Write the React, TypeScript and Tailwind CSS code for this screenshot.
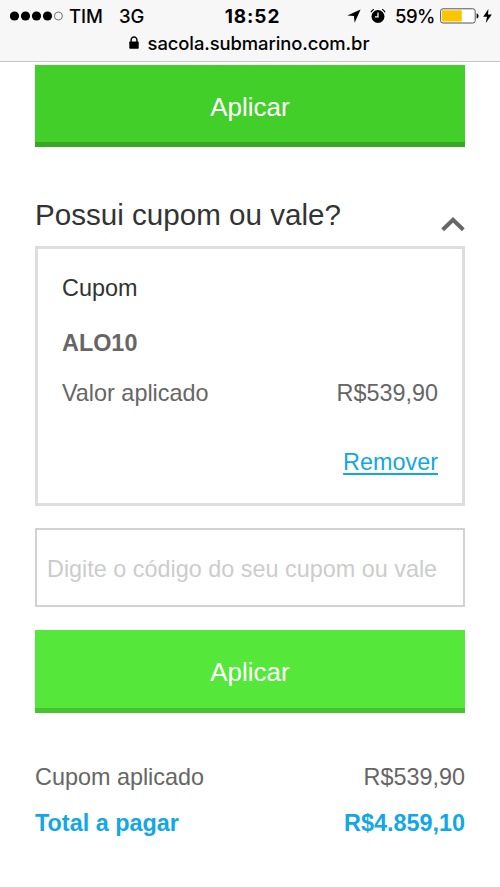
import { Fragment } from "react";

const signal = [true, true, true, true, false];

function StatusBar() {
  return (
    <div className="grid grid-cols-[1fr_60px_1fr] items-center h-8 pl-[10px] pr-[8px] text-black text-[18.5px] leading-8">
      <div className="flex items-center">
        <svg width="53" height="12" viewBox="0 0 53 12" className="shrink-0">
          {signal.map((on, i) => (
            <Fragment key={i}>
              {on ? (
                <circle cx={4.5 + i * 11} cy="6" r="4.6" fill="#000" />
              ) : (
                <circle cx={4.4 + i * 11} cy="6" r="4" fill="none" stroke="#555" strokeWidth="0.8" />
              )}
            </Fragment>
          ))}
        </svg>
        <span className="ml-[6px] w-[50px] font-medium">TIM</span>
        <span className="font-medium">3G</span>
      </div>
      <span className="pl-[3px] pt-[2px] text-center font-bold text-[19px] leading-[30px] tracking-[0.9px] whitespace-nowrap">18:52</span>
      <div className="flex items-center justify-end">
        <svg width="14" height="14" viewBox="0 0 14 14" className="shrink-0">
          <path d="M13.6 0.4L0.3 6.4L6.9 7.1L7.6 13.7Z" fill="#000" />
        </svg>
        <svg width="16" height="16" viewBox="0 0 16 16" className="ml-[9px] shrink-0">
          <circle cx="8" cy="8.5" r="6.5" fill="#000" />
          <path d="M0.9 4.2A8 8 0 0 1 3.7 1.2M12.3 1.2A8 8 0 0 1 15.1 4.2" fill="none" stroke="#000" strokeWidth="1.2" />
          <path d="M8 4.6V8.9H4.9" fill="none" stroke="#f7f7f7" strokeWidth="1.3" />
        </svg>
        <span className="ml-[9px] font-medium tracking-[-0.5px]">59%</span>
        <svg width="40" height="16" viewBox="0 0 40 16" className="ml-[5px] shrink-0">
          <rect x="0.6" y="0.8" width="34.6" height="14.2" rx="2.4" fill="#fff" stroke="#555" strokeWidth="1" />
          <rect x="2" y="2.2" width="19.8" height="11.4" rx="0.8" fill="#fdc500" />
          <path d="M36.6 5.4C39.2 6 39.2 9.8 36.6 10.4Z" fill="#000" />
        </svg>
        <svg width="9" height="14" viewBox="0 0 9 14" className="ml-[3px] shrink-0">
          <path d="M5.4 0L0.2 7.8H4L2.8 14L8.8 5.6H5Z" fill="#000" />
        </svg>
      </div>
    </div>
  );
}

function AddressBar() {
  return (
    <div className="flex justify-center h-[22px] pr-[2px] text-black">
      <svg width="10" height="13" viewBox="0 0 10 13" className="mt-[4px] mr-[9px] shrink-0">
        <path d="M2.1 6V3.8C2.1 0 7.9 0 7.9 3.8V6" fill="none" stroke="#000" strokeWidth="1.4" />
        <rect x="0.3" y="5.4" width="9.4" height="7.4" rx="0.8" fill="#000" />
      </svg>
      <span className="text-[18.4px] leading-[22px] font-medium tracking-[-0.08px]">sacola.submarino.com.br</span>
    </div>
  );
}

export default function App() {
  return (
    <div className="w-[500px] h-[887px] overflow-hidden bg-white text-[#666] text-[23.4px] font-['Liberation_Sans',Arial,sans-serif]">
      <header className="h-[62px] bg-[#f7f7f7] border-b border-[#c4c4c4] font-['Inter',sans-serif]">
        <StatusBar />
        <AddressBar />
      </header>

      <main className="flex flex-col px-[35px] pt-[3px]">
        <button className="h-[82px] bg-[#43cf29] border-b-[5px] border-[#37a825] text-white text-[26px] leading-none pt-[6px]">
          Aplicar
        </button>

        <div className="flex justify-between mt-[48px] h-[51px] text-[#333]">
          <h2 className="text-[29.6px] leading-[40px]">Possui cupom ou vale?</h2>
          <svg width="24" height="15" viewBox="0 0 24 15" className="mt-[22px]">
            <path d="M1.7 12.8L12 2.8L22.3 12.8" fill="none" stroke="#666" strokeWidth="4" />
          </svg>
        </div>

        <section className="flex flex-col h-[260px] border-[3px] border-[#ddd] px-6 pt-[24px] leading-[30px]">
          <h3 className="text-[#333]">Cupom</h3>
          <strong className="mt-[25px]">ALO10</strong>
          <div className="flex justify-between mt-[20px]">
            <span>Valor aplicado</span>
            <span>R$539,90</span>
          </div>
          <a className="mt-[39px] self-end text-[#12a7e0] underline decoration-[1.5px] underline-offset-[3px]">Remover</a>
        </section>

        <input
          className="mt-[22px] h-[79px] border-2 border-[#d2d2d2] bg-white px-[10px] pt-[4px] placeholder:text-[#ccc]"
          placeholder="Digite o código do seu cupom ou vale"
        />

        <button className="mt-[23px] h-[83px] bg-[#55e83a] border-b-[5px] border-[#47c230] text-white text-[26px] leading-none pt-[6px]">
          Aplicar
        </button>

        <div className="flex justify-between mt-[49px] leading-[30px]">
          <span>Cupom aplicado</span>
          <span>R$539,90</span>
        </div>
        <div className="flex justify-between mt-[16px] leading-[30px] font-bold text-[#12a7e6]">
          <span>Total a pagar</span>
          <span>R$4.859,10</span>
        </div>
      </main>
    </div>
  );
}
